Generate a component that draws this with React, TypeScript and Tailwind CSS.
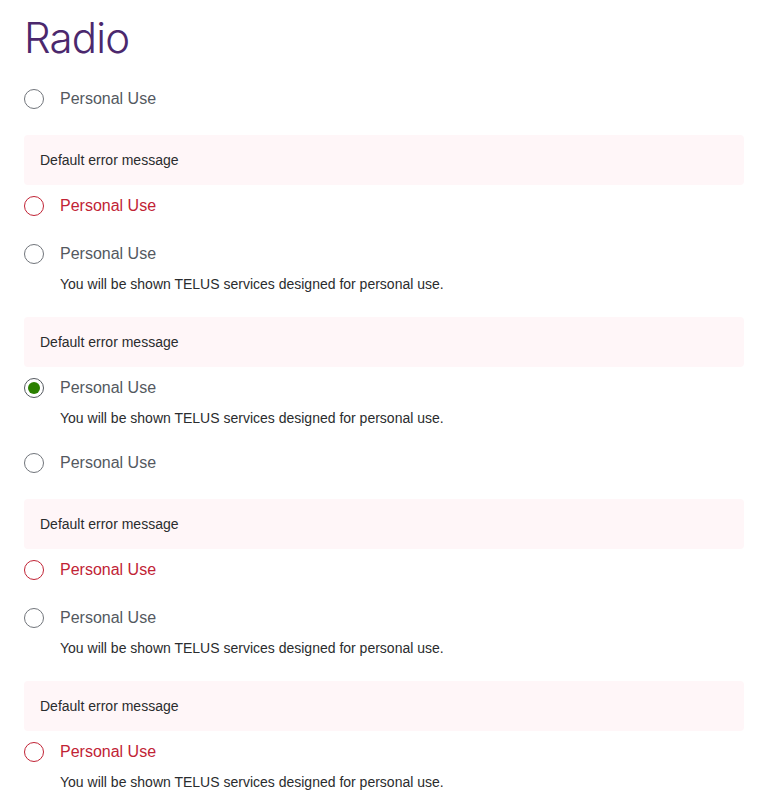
type Item = {
  error?: boolean;
  checked?: boolean;
  description?: boolean;
};

const items: Item[] = [
  {},
  { error: true },
  { description: true },
  { error: true, checked: true, description: true },
  {},
  { error: true },
  { description: true },
  { error: true, description: true },
];

function RadioCircle({ error, checked }: { error?: boolean; checked?: boolean }) {
  return (
    <span
      className={`flex h-5 w-5 shrink-0 items-center justify-center rounded-full border bg-white ${
        error ? "border-[#c12335]" : checked ? "border-[#54595f]" : "border-[#71757b]"
      }`}
    >
      {checked && <span className="h-3 w-3 rounded-full bg-[#2b8000]" />}
    </span>
  );
}

export default function App() {
  return (
    <div className="min-h-screen bg-white px-6 pt-3 font-['Liberation_Sans',Arial,sans-serif]">
      <h1 className="font-['Inter',sans-serif] text-[42px] font-light leading-[52px] tracking-[-0.8px] text-[#4b286d]">
        Radio
      </h1>

      <div className="mt-[23px] flex flex-col gap-6">
        {items.map((item, i) => {
          // checked item keeps the error box but not the red state
          const red = item.error && !item.checked;
          return (
            <div key={i} className="flex flex-col">
              {item.error && (
                <div className="mb-[9px] flex h-[50px] items-center rounded bg-[#fff6f8] px-4 text-sm text-[#2a2c2e]">
                  Default error message
                </div>
              )}
              <label className="flex h-6 items-center gap-4">
                <RadioCircle error={red} checked={item.checked} />
                <span className={`text-base ${red ? "text-[#c12335]" : "text-[#54595f]"}`}>
                  Personal Use
                </span>
              </label>
              {item.description && (
                <p className="mt-[9px] pl-9 text-sm leading-[18px] text-[#2a2c2e]">
                  You will be shown TELUS services designed for personal use.
                </p>
              )}
            </div>
          );
        })}
      </div>
    </div>
  );
}
